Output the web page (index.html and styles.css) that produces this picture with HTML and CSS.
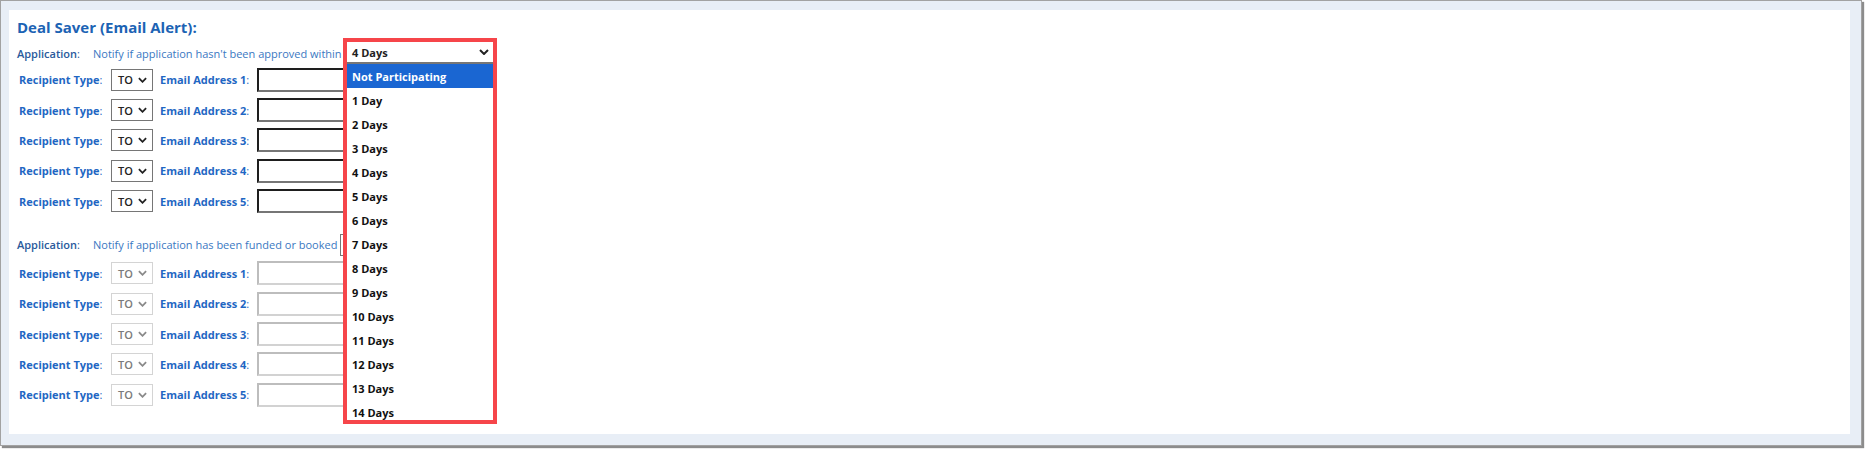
FILE: index.html
```html
<!DOCTYPE html>
<html lang="en">
<head>
<meta charset="utf-8">
<title>Deal Saver (Email Alert)</title>
<link rel="stylesheet" href="styles.css">
</head>
<body>
<div class="frame">
  <div class="panel">
    <h1 class="title">Deal Saver (Email Alert):</h1>

    <div class="group">
      <div class="app-row">
        <span class="app-label">Application<span class="colon">:</span></span>
        <span class="notify notify-a">Notify if application hasn't been approved within</span>
        <div class="dd">
          <div class="face"><span>4 Days</span><svg class="chev" width="10" height="6" viewBox="0 0 10 6"><polyline points="1,1 5,5 9,1" fill="none" stroke="#222" stroke-width="2"/></svg></div>
          <ul class="list">
            <li class="item selected">Not Participating</li>
            <li class="item">1 Day</li>
            <li class="item">2 Days</li>
            <li class="item">3 Days</li>
            <li class="item">4 Days</li>
            <li class="item">5 Days</li>
            <li class="item">6 Days</li>
            <li class="item">7 Days</li>
            <li class="item">8 Days</li>
            <li class="item">9 Days</li>
            <li class="item">10 Days</li>
            <li class="item">11 Days</li>
            <li class="item">12 Days</li>
            <li class="item">13 Days</li>
            <li class="item">14 Days</li>
          </ul>
          <div class="annot"></div>
        </div>
      </div>
      <div class="rows">
        <div class="row"><span class="lbl lbl-type">Recipient Type<span class="colon">:</span></span><div class="sel"><span>TO</span><svg class="chev" width="9" height="6" viewBox="0 0 10 6"><polyline points="1,1 5,5 9,1" fill="none" stroke="#222" stroke-width="2"/></svg></div><span class="lbl lbl-email">Email Address 1<span class="colon">:</span></span><div class="input"></div></div>
        <div class="row"><span class="lbl lbl-type">Recipient Type<span class="colon">:</span></span><div class="sel"><span>TO</span><svg class="chev" width="9" height="6" viewBox="0 0 10 6"><polyline points="1,1 5,5 9,1" fill="none" stroke="#222" stroke-width="2"/></svg></div><span class="lbl lbl-email">Email Address 2<span class="colon">:</span></span><div class="input"></div></div>
        <div class="row"><span class="lbl lbl-type">Recipient Type<span class="colon">:</span></span><div class="sel"><span>TO</span><svg class="chev" width="9" height="6" viewBox="0 0 10 6"><polyline points="1,1 5,5 9,1" fill="none" stroke="#222" stroke-width="2"/></svg></div><span class="lbl lbl-email">Email Address 3<span class="colon">:</span></span><div class="input"></div></div>
        <div class="row"><span class="lbl lbl-type">Recipient Type<span class="colon">:</span></span><div class="sel"><span>TO</span><svg class="chev" width="9" height="6" viewBox="0 0 10 6"><polyline points="1,1 5,5 9,1" fill="none" stroke="#222" stroke-width="2"/></svg></div><span class="lbl lbl-email">Email Address 4<span class="colon">:</span></span><div class="input"></div></div>
        <div class="row"><span class="lbl lbl-type">Recipient Type<span class="colon">:</span></span><div class="sel"><span>TO</span><svg class="chev" width="9" height="6" viewBox="0 0 10 6"><polyline points="1,1 5,5 9,1" fill="none" stroke="#222" stroke-width="2"/></svg></div><span class="lbl lbl-email">Email Address 5<span class="colon">:</span></span><div class="input"></div></div>
      </div>
    </div>

    <div class="group group-b">
      <div class="app-row">
        <span class="app-label">Application<span class="colon">:</span></span>
        <span class="notify notify-b">Notify if application has been funded or booked</span>
        <div class="face closed"></div>
      </div>
      <div class="rows">
        <div class="row disabled"><span class="lbl lbl-type">Recipient Type<span class="colon">:</span></span><div class="sel"><span>TO</span><svg class="chev" width="9" height="6" viewBox="0 0 10 6"><polyline points="1,1 5,5 9,1" fill="none" stroke="#8a8a8a" stroke-width="2"/></svg></div><span class="lbl lbl-email">Email Address 1<span class="colon">:</span></span><div class="input"></div></div>
        <div class="row disabled"><span class="lbl lbl-type">Recipient Type<span class="colon">:</span></span><div class="sel"><span>TO</span><svg class="chev" width="9" height="6" viewBox="0 0 10 6"><polyline points="1,1 5,5 9,1" fill="none" stroke="#8a8a8a" stroke-width="2"/></svg></div><span class="lbl lbl-email">Email Address 2<span class="colon">:</span></span><div class="input"></div></div>
        <div class="row disabled"><span class="lbl lbl-type">Recipient Type<span class="colon">:</span></span><div class="sel"><span>TO</span><svg class="chev" width="9" height="6" viewBox="0 0 10 6"><polyline points="1,1 5,5 9,1" fill="none" stroke="#8a8a8a" stroke-width="2"/></svg></div><span class="lbl lbl-email">Email Address 3<span class="colon">:</span></span><div class="input"></div></div>
        <div class="row disabled"><span class="lbl lbl-type">Recipient Type<span class="colon">:</span></span><div class="sel"><span>TO</span><svg class="chev" width="9" height="6" viewBox="0 0 10 6"><polyline points="1,1 5,5 9,1" fill="none" stroke="#8a8a8a" stroke-width="2"/></svg></div><span class="lbl lbl-email">Email Address 4<span class="colon">:</span></span><div class="input"></div></div>
        <div class="row disabled"><span class="lbl lbl-type">Recipient Type<span class="colon">:</span></span><div class="sel"><span>TO</span><svg class="chev" width="9" height="6" viewBox="0 0 10 6"><polyline points="1,1 5,5 9,1" fill="none" stroke="#8a8a8a" stroke-width="2"/></svg></div><span class="lbl lbl-email">Email Address 5<span class="colon">:</span></span><div class="input"></div></div>
      </div>
    </div>
  </div>
</div>
</body>
</html>
```

FILE: styles.css
```css
html, body {
  margin: 0;
  padding: 0;
  background: #ffffff;
}

body {
  width: 1869px;
  height: 453px;
  font-family: "Open Sans", "Noto Sans", sans-serif;
  font-size: 11px;
}

.frame {
  width: 1862px;
  height: 446px;
  box-sizing: border-box;
  border: 1px solid #a2a2a2;
  background: #e8eef6;
  padding: 9px 11px 11px 8px;
  box-shadow: 2px 2px 1px #8c8c8c;
}

.panel {
  background: #ffffff;
  height: 424px;
  box-sizing: border-box;
  padding: 7px 0 0 8px;
}

.title {
  margin: 0;
  font-size: 15px;
  line-height: 20px;
  font-weight: 700;
  color: #1c63b4;
}

.app-row {
  display: flex;
  align-items: center;
  height: 22px;
  margin-top: 5px;
}

.group-b .app-row {
  margin-top: 21.7px;
}

.app-label {
  flex: 0 0 76px;
  font-weight: 600;
  color: #2a5a9c;
  white-space: nowrap;
}

.colon {
  font-weight: 400;
}

.notify {
  flex-shrink: 0;
  color: #3a78c2;
  white-space: nowrap;
}

.notify-a { width: 254px; }
.notify-b { width: 247px; }

.dd {
  position: relative;
  flex: 0 0 146px;
  height: 22px;
  z-index: 10;
}

.face {
  width: 146px;
  height: 22px;
  box-sizing: border-box;
  border-bottom: 2px solid #767676;
  background: #ffffff;
  display: flex;
  align-items: center;
  justify-content: space-between;
  padding: 0 4px 0 5px;
  font-weight: 700;
  color: #222222;
  flex-shrink: 0;
}

.face.closed {
  border: 1px solid #767676;
}

.chev {
  display: block;
  flex-shrink: 0;
}

.list {
  position: absolute;
  top: 22px;
  left: 0;
  width: 146px;
  height: 356px;
  margin: 0;
  padding: 0;
  list-style: none;
  background: #ffffff;
  overflow: hidden;
}

.item {
  height: 24px;
  line-height: 25px;
  padding-left: 5px;
  font-weight: 700;
  color: #111111;
  white-space: nowrap;
}

.item.selected {
  background: #1a66d2;
  color: #ffffff;
}

.annot {
  position: absolute;
  top: -4px;
  left: -4px;
  width: 154px;
  height: 386px;
  box-sizing: border-box;
  border: 4px solid #f6454a;
  pointer-events: none;
}

.rows {
  display: flex;
  flex-direction: column;
  gap: 8.4px;
  margin-top: 4.7px;
  padding-left: 2px;
}

.group-b .rows {
  margin-top: 6.3px;
}

.row {
  display: flex;
  align-items: center;
  height: 22px;
}

.lbl {
  flex-shrink: 0;
  font-weight: 700;
  color: #1f67c3;
  white-space: nowrap;
}

.lbl-type { width: 92px; }
.lbl-email { width: 97px; }

.sel {
  flex: 0 0 42px;
  height: 22px;
  box-sizing: border-box;
  border: 1px solid #767676;
  margin-right: 7px;
  display: flex;
  align-items: center;
  justify-content: space-between;
  padding: 0 5px 0 6px;
  font-weight: 600;
  color: #222222;
}

.input {
  flex: 0 0 200px;
  height: 24px;
  box-sizing: border-box;
  border-style: solid;
  border-width: 2px;
  border-color: #1e1e1e #767676 #767676 #1e1e1e;
  background: #ffffff;
}

.row.disabled .sel {
  border-color: #d4d4d4;
  color: #7a7a7a;
}

.row.disabled .input {
  border-color: #bdbdbd #dadada #d2d2d2 #bdbdbd;
}
```
